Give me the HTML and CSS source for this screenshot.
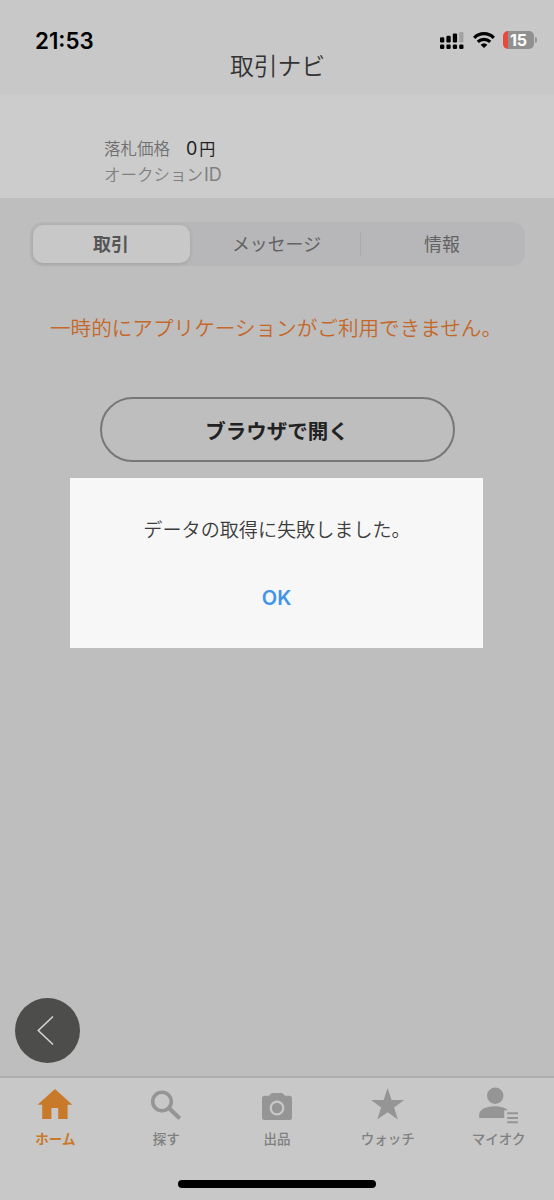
FILE: index.html
```html
<!DOCTYPE html>
<html lang="ja">
<head>
    <meta charset="UTF-8">
    <meta name="viewport" content="width=device-width, initial-scale=1.0">
    <title>取引ナビ</title>
    <link rel="stylesheet" href="styles.css">
</head>
<body>
    <div class="screen">
        <header class="header">
            <div class="status-bar">
                <span class="time">21:53</span>
                <div class="status-icons">
                    <svg class="signal" width="24" height="18" viewBox="0 0 24 18">
                        <rect x="0" y="5.2" width="4.3" height="5.2" rx="1.2"/>
                        <rect x="6.4" y="3.8" width="4.3" height="6.6" rx="1.2"/>
                        <rect x="12.8" y="1.5" width="4.3" height="8.9" rx="1.2"/>
                        <rect x="19.2" y="0" width="4.3" height="10.4" rx="1.2" fill="#a3a3a3"/>
                        <rect x="0" y="12.6" width="4.3" height="4.4" rx="1.2"/>
                        <rect x="6.4" y="12.6" width="4.3" height="4.4" rx="1.2"/>
                        <rect x="12.8" y="12.6" width="4.3" height="4.4" rx="1.2"/>
                        <rect x="19.2" y="12.6" width="4.3" height="4.4" rx="1.2"/>
                    </svg>
                    <svg class="wifi" width="22" height="16" viewBox="0 0 22 16">
                        <path d="M1.2 5.8a13.8 13.8 0 0 1 19.6 0M4.8 9.9a8.900 8.900 0 0 1 12.400 0" fill="none" stroke="#000" stroke-width="3.2"/>
                        <path d="M11 16l-3.4-3.2a5 5 0 0 1 6.8 0z"/>
                    </svg>
                    <div class="battery"><span class="battery-level">15</span></div>
                </div>
            </div>
            <h1 class="title">取引ナビ</h1>
        </header>

        <section class="item-info">
            <p class="price">落札価格<span class="price-value">0<span class="yen">円</span></span></p>
            <p class="auction-id">オークション<span class="id-label">ID</span></p>
        </section>

        <main class="content">
            <div class="segments">
                <button class="segment active">取引</button>
                <button class="segment">メッセージ</button>
                <button class="segment divided">情報</button>
            </div>
            <p class="error">一時的にアプリケーションがご利用できません。</p>
            <button class="open-browser">ブラウザで開く</button>
            <button class="back" aria-label="戻る">
                <svg width="18" height="31" viewBox="0 0 18 31">
                    <path d="M16 1.5L1.3 15.5l14.7 14" fill="none" stroke="#d2d2cf" stroke-width="1.6"/>
                </svg>
            </button>
        </main>

        <nav class="tab-bar">
            <a class="tab current">
                <svg width="36" height="34" viewBox="0 0 36 34">
                    <path d="M18 1L.5 16.8H5.200V31h9.200V20h6.800V31h9.400V16.800H35.300z"/>
                </svg>
                <span>ホーム</span>
            </a>
            <a class="tab">
                <svg width="36" height="34" viewBox="0 0 36 34">
                    <circle cx="14" cy="13.5" r="9.3" fill="none" stroke="#959595" stroke-width="3.600"/>
                    <path d="M21.600 20.800l10.200 9.700" fill="none" stroke="#959595" stroke-width="4.200"/>
                </svg>
                <span>探す</span>
            </a>
            <a class="tab">
                <svg width="36" height="34" viewBox="0 0 36 34">
                    <path d="M10 7.8l2.2-2.2q.5-.6 1.400-.6h8.800q.9 0 1.400.6L26 7.800h4.500q2.500 0 2.500 2.500v19.200q0 2.500-2.500 2.500h-25Q3 32 3 29.500V10.300q0-2.500 2.500-2.500z"/>
                    <circle cx="18" cy="20" r="6.300" fill="#959595" stroke="#c8c8c8" stroke-width="2.200"/>
                </svg>
                <span>出品</span>
            </a>
            <a class="tab">
                <svg width="36" height="34" viewBox="0 0 36 34">
                    <path d="M17.600 0L21.600 12 34.100 12 24.100 19.600 27.900 31.500 17.600 24.200 7.300 31.500 11.100 19.600 1.100 12 13.600 12z"/>
                </svg>
                <span>ウォッチ</span>
            </a>
            <a class="tab">
                <svg width="42" height="34" viewBox="0 0 42 34">
                    <circle cx="17.200" cy="7.800" r="8.200"/>
                    <path d="M1.200 30v-3.500C1.200 21 9.200 18.200 16.700 18.200c5.500 0 10.500 1.500 13.500 4h-4V30z"/>
                    <path d="M29.200 25.200H40M29.200 29.900H40M29.200 34.300H40" fill="none" stroke="#959595" stroke-width="2"/>
                </svg>
                <span>マイオク</span>
            </a>
            <div class="home-indicator"></div>
        </nav>

        <div class="dialog" role="alertdialog">
            <p class="dialog-message">データの取得に失敗しました。</p>
            <button class="dialog-ok">OK</button>
        </div>
    </div>
</body>
</html>
```
FILE: styles.css
```css
* {
    box-sizing: border-box;
}
body {
    margin: 0;
    background: #bebebe;
    color: #222;
    font-family: "Inter", "Noto Sans CJK JP", sans-serif;
}
h1, p {
    margin: 0;
}
button {
    padding: 0;
    border: none;
    background: none;
    color: inherit;
    font-family: inherit;
}
.screen {
    position: relative;
    display: flex;
    flex-direction: column;
    width: 554px;
    height: 1200px;
    overflow: hidden;
}
.header {
    height: 94px;
    background: #c8c8c8;
}
.status-bar {
    display: flex;
    justify-content: space-between;
    height: 51px;
    padding: 30px 17px 0 35px;
}
.time {
    color: #000;
    font-size: 22.3px;
    font-weight: 600;
    line-height: 22px;
}
.status-icons {
    display: flex;
    align-items: flex-start;
    padding-top: 1px;
}
.signal {
    margin-top: 1px;
}
.wifi {
    margin: 1px 8px 0 9px;
}
.battery {
    position: relative;
    width: 31px;
    height: 18px;
    margin-right: 3px;
    border-radius: 5px;
    background: linear-gradient(90deg, #e8493d 5px, #909090 5px);
    text-align: center;
}
.battery::after {
    content: "";
    position: absolute;
    top: 6px;
    right: -3px;
    width: 2px;
    height: 6px;
    border-radius: 0 2px 2px 0;
    background: #969696;
}
.battery-level {
    display: block;
    color: #fff;
    font-size: 16px;
    font-weight: 700;
    line-height: 18px;
}
.title {
    color: #333;
    font-size: 23.8px;
    font-weight: 350;
    line-height: 31px;
    text-align: center;
    text-indent: 1px;
}
.item-info {
    height: 104px;
    padding: 42px 0 0 104px;
    background: #ccc;
    color: #707070;
    font-size: 16.5px;
    font-weight: 350;
    line-height: 25px;
}
.price-value {
    margin-left: 16px;
    color: #222;
    font-size: 18px;
    font-weight: 400;
}
.yen {
    margin-left: 2px;
    font-size: 16px;
}
.auction-id {
    color: #808080;
}
.id-label {
    margin-left: 1px;
    font-size: 18px;
    font-weight: 400;
}
.content {
    display: flex;
    flex: 1;
    flex-direction: column;
    align-items: center;
    padding: 24px 0 13px;
}
.segments {
    display: flex;
    width: 495px;
    height: 44px;
    padding: 3px 0 3px 3px;
    border-radius: 13px;
    background: #b7b7b9;
}
.segment {
    position: relative;
    flex: 1;
    color: #626262;
    font-size: 17.9px;
    line-height: 39px;
}
.segment.active {
    flex: 0 0 157px;
    margin-right: 4px;
    border-radius: 10px;
    background: #c8c8c8;
    box-shadow: 0 1px 4px rgba(0, 0, 0, 0.12);
    color: #555;
    font-weight: 700;
}
.segment.divided {
    flex: 0 0 165px;
}
.segment.divided::before {
    content: "";
    position: absolute;
    top: 7px;
    left: 0;
    width: 1px;
    height: 24px;
    background: #aaaaac;
}
.error {
    margin-top: 47px;
    color: #c4682a;
    font-size: 20.6px;
    font-weight: 350;
    line-height: 32px;
    text-indent: -2px;
    white-space: nowrap;
}
.open-browser {
    width: 355px;
    height: 65px;
    margin-top: 52px;
    border: 2px solid #777;
    border-radius: 33px;
    font-size: 20.5px;
    font-weight: 700;
}
.back {
    display: flex;
    align-items: center;
    align-self: flex-start;
    width: 65px;
    height: 65px;
    margin: auto 0 0 15px;
    padding-left: 22px;
    border-radius: 50%;
    background: #4d4d4b;
}
.tab-bar {
    display: grid;
    grid-template-columns: repeat(5, 1fr);
    justify-items: center;
    height: 124px;
    padding-top: 10px;
    border-top: 2px solid #afafaf;
    background: #c8c8c8;
}
.tab {
    display: flex;
    flex-direction: column;
    align-items: center;
    color: #808080;
    font-size: 13.5px;
    font-weight: 500;
    line-height: 20px;
}
.tab svg {
    margin-bottom: 7px;
    fill: #959595;
    overflow: visible;
}
.tab.current {
    color: #c8792a;
    font-weight: 700;
}
.tab.current svg {
    fill: #c8792a;
}
.home-indicator {
    grid-column: 1 / -1;
    align-self: end;
    width: 198px;
    height: 8px;
    margin-bottom: 12px;
    border-radius: 4px;
    background: #000;
}
.dialog {
    position: absolute;
    top: 478px;
    left: 70px;
    display: flex;
    flex-direction: column;
    align-items: center;
    width: 413px;
    height: 170px;
    padding-top: 37px;
    background: #f7f7f7;
}
.dialog-message {
    color: #3c3c3c;
    font-size: 19.1px;
    font-weight: 350;
    line-height: 30px;
    text-indent: 1px;
}
.dialog-ok {
    margin-top: 38px;
    color: #4094ea;
    font-size: 20px;
    font-weight: 600;
    line-height: 30px;
}
```
